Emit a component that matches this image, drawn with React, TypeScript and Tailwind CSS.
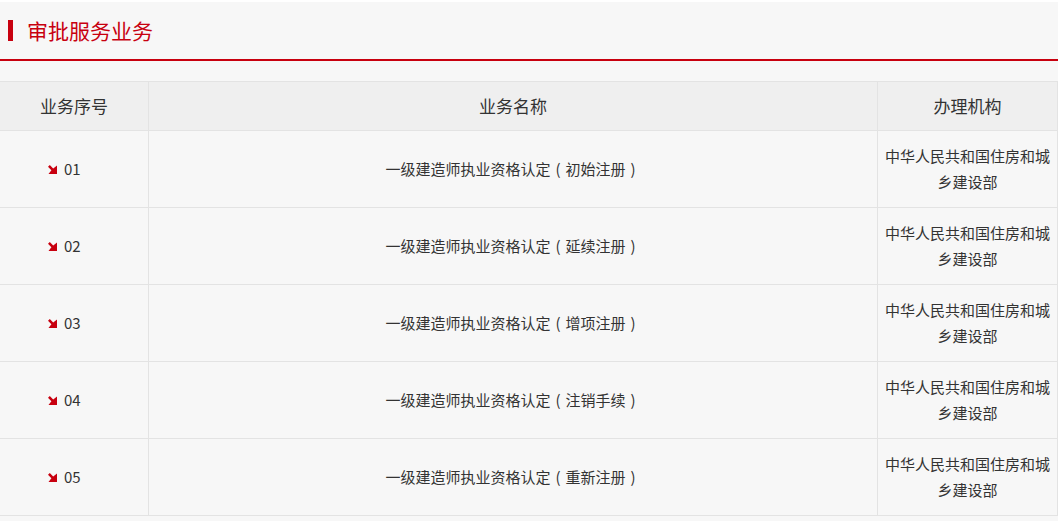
import React from "react";

const rows = [
  { no: "01", name: "初始注册" },
  { no: "02", name: "延续注册" },
  { no: "03", name: "增项注册" },
  { no: "04", name: "注销手续" },
  { no: "05", name: "重新注册" },
];

function Arrow() {
  return (
    <svg width="9" height="9" viewBox="0 0 9 9" className="shrink-0">
      <path d="M0 1.8 L1.8 0 L5.2 3.4 L9 0.5 L9 9 L0.5 9 L3.4 5.2 Z" fill="#c8000f" />
    </svg>
  );
}

const P = ({ c }: { c: string }) => (
  <span className="inline-block w-[15px] text-center">{c}</span>
);

export default function App() {
  return (
    <div
      className="bg-white pt-[2px] w-[1061px] h-[521px]"
      style={{ fontFamily: '"Microsoft YaHei", "Noto Sans CJK SC", "Noto Sans", sans-serif' }}
    >
      <div className="w-[1058px] h-[519px] bg-[#f7f7f7]">
        <div className="h-[59px] border-b-2 border-[#c8000f] flex items-center pl-[8px]">
          <div className="w-[5px] h-[21px] bg-[#c8000f]" />
          <div className="ml-[14px] text-[21px] text-[#c8000f] leading-none">审批服务业务</div>
        </div>
        <div className="mt-[20px] border-t border-[#e3e3e3] text-[#333]">
          <div className="flex h-[49px] bg-[#efefef] border-b border-[#e3e3e3] text-[17px]">
            <div className="w-[149px] border-r border-[#e3e3e3] flex items-center justify-center">业务序号</div>
            <div className="w-[729px] border-r border-[#e3e3e3] flex items-center justify-center">业务名称</div>
            <div className="w-[180px] border-r border-[#e3e3e3] flex items-center justify-center">办理机构</div>
          </div>
          {rows.map((r) => (
            <div key={r.no} className="flex h-[77px] border-b border-[#e3e3e3] text-[15px]">
              <div className="w-[149px] border-r border-[#e3e3e3] flex items-center pl-[48px] gap-[7px]">
                <Arrow />
                <span>{r.no}</span>
              </div>
              <div className="w-[729px] border-r border-[#e3e3e3] flex items-center justify-center">
                <span>
                  一级建造师执业资格认定<P c="(" />{r.name}<P c=")" />
                </span>
              </div>
              <div className="w-[180px] border-r border-[#e3e3e3] flex items-center justify-center text-center px-[7px] leading-[26px]">
                中华人民共和国住房和城乡建设部
              </div>
            </div>
          ))}
        </div>
      </div>
    </div>
  );
}
